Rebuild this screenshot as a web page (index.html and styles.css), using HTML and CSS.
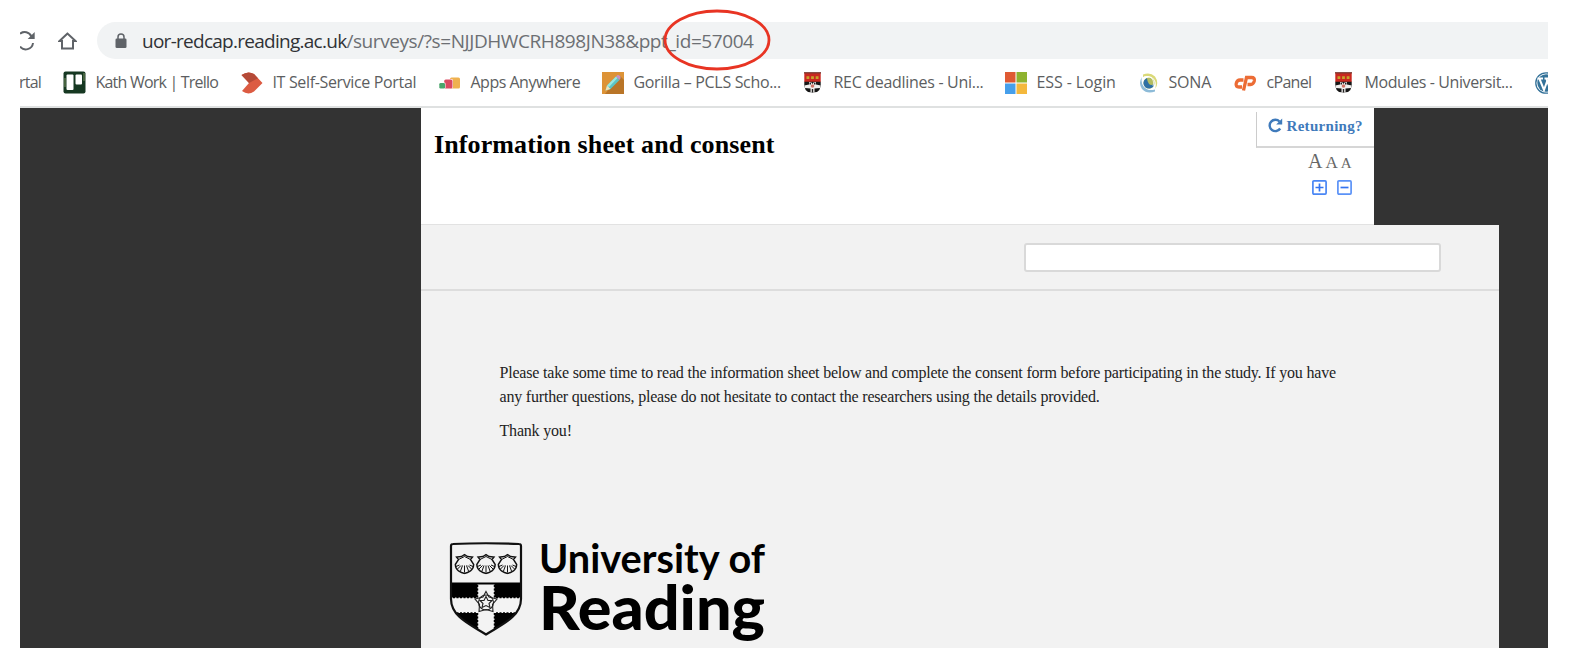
FILE: index.html
```html
<!DOCTYPE html>
<html lang="en">
<head>
<meta charset="utf-8">
<title>Information sheet and consent</title>
<link rel="stylesheet" href="styles.css">
</head>
<body>
<svg width="0" height="0" class="defs" aria-hidden="true">
  <defs>
    <symbol id="crest" viewBox="0 0 17 21">
      <path d="M.3 1H16.700V10H.3Z" fill="#c9281f"/>
      <path d="M0 .8H17" fill="none" stroke="#7d3a33" stroke-width="1.400"/>
      <path d="M.3 9.800H16.700V14Q16.200 18 13 20L8.500 20.500L4 20Q.8 18 .3 14Z" fill="#161616"/>
      <path d="M.3 13.500L5 12.500V10H7L8.500 12L10 10H12V12.500L16.700 13.500L16 16L10.500 16.500V20.500H6.500V16.500L1 16Z" fill="#f1efed"/>
      <path d="M5.500 10.500h1.500v2H5.500zM10 10.500h1.500v2H10zM7.800 17h1.400v3.500H7.800z" fill="#222"/>
      <circle cx="8.500" cy="14" r="1.800" fill="#cf7568"/>
      <path d="M2.500 4.300h2.800v2.700h-2.800zM7.100 4.300h2.800v2.700h-2.800zM11.700 4.300h2.800v2.700h-2.800z" fill="#c6a62b"/>
    </symbol>
    <symbol id="shell" viewBox="-10 -1 20 21">
      <path d="M0 0L3 2L8 2.500L6 5L9.200 10Q9 14 6 16.500L3 18L0 19L-3 18L-6 16.500Q-9 14-9.200 10L-6 5L-8 2.500L-3 2Z" fill="#f3f3f3" stroke="#111" stroke-width="1.400"/>
      <path d="M0 11V18M-2 11L-4 16.500M2 11L4 16.500M-3.500 11L-7 14.500M3.500 11L7 14.500M-5 10.500L-8.500 12M5 10.500L8.500 12M-6 5L0 2L6 5" fill="none" stroke="#111" stroke-width="1"/>
    </symbol>
  </defs>
</svg>
<div class="shot">
  <header class="toolbar">
    <svg class="reload" width="16" height="20" viewBox="0 0 16 20"><path d="M0 2.800A7.300 7.300 0 0 1 11.400 5.500M13 12A7.300 7.300 0 0 1 0 15.600" fill="none" stroke="#5f6368" stroke-width="2"/><path d="M14.700 1V8H7.700Z" fill="#5f6368"/></svg>
    <svg class="home" width="19" height="18" viewBox="0 0 19 18"><path d="M9.500 1.500L1.500 9H4V16.500H15V9H17.500Z" fill="none" stroke="#5f6368" stroke-width="2"/></svg>
    <div class="address">
      <svg width="12" height="16" viewBox="0 0 12 16"><rect x=".5" y="5.500" width="11" height="9.500" rx="1.300" fill="#5f6368"/><path d="M3 6V4a3 3 0 0 1 6 0V6" fill="none" stroke="#5f6368" stroke-width="1.500"/></svg>
      <span class="url"><b>uor-redcap.reading.ac.uk</b>/surveys/?s=NJJDHWCRH898JN38&amp;ppt_id=57004</span>
      <svg class="ring" width="108" height="62" viewBox="0 0 108 62"><ellipse cx="54" cy="31" rx="52" ry="29" fill="none" stroke="#e83423" stroke-width="2.800"/></svg>
    </div>
  </header>
  <nav class="bookmarks">
    <a class="bm cut"><span class="label">rtal</span></a>
    <a class="bm trello"><svg width="23" height="23" viewBox="0 0 23 23"><rect x=".5" y=".5" width="22" height="22" rx="2" fill="#163822"/><path d="M1 7h2v9H1zM20 2h2v8h-2z" fill="#46633f"/><rect x="3.500" y="3.500" width="7" height="15.500" rx="1" fill="#fff"/><rect x="12.500" y="3.500" width="6.500" height="10" rx="1" fill="#fff"/></svg><span class="label">Kath Work | Trello</span></a>
    <a class="bm it"><svg width="22" height="22" viewBox="0 0 22 22"><path d="M.5 3Q7-1.500 13 2L21.500 11L13 19.500Q7 23.500 1 19L8 11Z" fill="#dc5b42"/><path d="M.5 3Q7-1.500 13 2L17 6.200L8 11Z" fill="#b54a37"/></svg><span class="label">IT Self-Service Portal</span></a>
    <a class="bm apps"><svg width="22" height="12" viewBox="0 0 22 12"><rect x="11" y=".5" width="10" height="11" rx="1.500" fill="#efb14f"/><rect x="5" y="2" width="9" height="9.500" rx="1.500" fill="#fff"/><rect x="5.200" y="2.500" width="8.300" height="9" rx="1.500" fill="#db4a61"/><rect x="0" y="5.500" width="6.500" height="6" rx="1.300" fill="#fff"/><rect x=".3" y="6" width="5.700" height="5.500" rx="1.300" fill="#4aa66c"/></svg><span class="label">Apps Anywhere</span></a>
    <a class="bm gorilla"><svg width="22" height="22" viewBox="0 0 22 22"><path d="M0 0H22V22H0Z" fill="#dd9337"/><path d="M18 4L22 8V22H3Z" fill="#b97527"/><path d="M3.500 18.500L5 13.500L14 4.500L17.500 8L8.500 17Z" fill="#5cc5c4"/><path d="M5 13.500L14 4.500L15.500 6L7 15Z" fill="#9be8df"/><path d="M14 4.500L15.500 3Q17 2.500 18.500 4.500Q19 6 17.500 8Z" fill="#c792c4"/><path d="M3.500 18.500L5 13.500L8.500 17Z" fill="#eee3bb"/></svg><span class="label">Gorilla – PCLS Scho...</span></a>
    <a class="bm rec"><svg width="17" height="21"><use href="#crest"/></svg><span class="label">REC deadlines - Uni...</span></a>
    <a class="bm ess"><svg width="22" height="22" viewBox="0 0 22 22"><path d="M0 0H10.500V10.500H0Z" fill="#df5a33"/><path d="M11.500 0H22V10.500H11.500Z" fill="#8eb32f"/><path d="M0 11.500H10.500V22H0Z" fill="#469feb"/><path d="M11.500 11.500H22V22H11.500Z" fill="#f4b83c"/></svg><span class="label">ESS - Login</span></a>
    <a class="bm sona"><svg width="20" height="22" viewBox="0 0 20 22"><circle cx="10" cy="11" r="5.500" fill="#b3bd62"/><path d="M8 6Q4 8 4.500 12Q6 17 11 16.500Q15 15.500 15 12Q12 14 10 12Q8 9 8 6Z" fill="#2e70a5"/><path d="M4 2.500Q11-.5 16 4.500Q20.500 11 16 17Q18 11 15 7Q11 2.500 4 5Z" fill="#dad978"/><path d="M16 19.500Q8 22.500 3 17Q-1 11 3 5Q1.500 11 5 15Q9 19.500 16 17.500Z" fill="#8dbbd8"/><path d="M5 5Q11 3 14 8Q15.500 11 14 14" fill="none" stroke="#fff" stroke-width=".8"/></svg><span class="label">SONA</span></a>
    <a class="bm cpanel"><svg width="23" height="16" viewBox="0 0 23 16"><path d="M9.500 5H6Q3 5 2.200 8.500Q1.500 12 5 12H8" fill="none" stroke="#ec6c35" stroke-width="3.300"/><path d="M9.500 15.500L12.500 2.500H17.500Q21 2.500 20.300 6Q19.500 9.500 16.500 9.500H13.500" fill="none" stroke="#ec6c35" stroke-width="3.300"/></svg><span class="label">cPanel</span></a>
    <a class="bm modules"><svg width="17" height="21"><use href="#crest"/></svg><span class="label">Modules - Universit...</span></a>
    <a class="bm wp"><svg width="22" height="22" viewBox="0 0 22 22"><circle cx="11" cy="11" r="10.200" fill="#fff" stroke="#347299" stroke-width="1.300"/><circle cx="11" cy="11" r="8.700" fill="#347299"/><path d="M2.500 6.500H8M4.500 7L9 18L12 9.500M9.500 6.500H14.500M11.500 7L15.500 18L18.500 8" fill="none" stroke="#fff" stroke-width="2"/></svg></a>
  </nav>
  <main class="page">
    <section class="title-row">
      <h1>Information sheet and consent</h1>
      <aside class="tools">
        <a class="returning"><svg width="15" height="15" viewBox="0 0 15 15"><path d="M12.200 10.500A5.700 5.700 0 1 1 11.500 3.500" fill="none" stroke="#3f7abb" stroke-width="2.400"/><path d="M14.200.5V6.500H8.200Z" fill="#3f7abb"/></svg><span>Returning?</span></a>
        <div class="sizes"><span class="big">A</span><span class="mid">A</span><span class="small">A</span></div>
        <div class="zoomers">
          <svg width="15" height="15" viewBox="0 0 15 15"><rect x=".9" y=".9" width="13.200" height="13.200" rx="1" fill="none" stroke="#4a87f5" stroke-width="1.700"/><path d="M3.500 7.500H11.500M7.500 3.500V11.500" stroke="#3474f0" stroke-width="1.700"/></svg>
          <svg width="15" height="15" viewBox="0 0 15 15"><rect x=".9" y=".9" width="13.200" height="13.200" rx="1" fill="none" stroke="#5b92f7" stroke-width="1.700"/><path d="M3.500 7.500H11.500" stroke="#3474f0" stroke-width="1.700"/></svg>
        </div>
      </aside>
    </section>
    <section class="survey">
      <div class="field-row"><input class="field" type="text" aria-label="Participant ID"></div>
      <div class="intro">
        <p>Please take some time to read the information sheet below and complete the consent form before participating in the study. If you have<br>any further questions, please do not hesitate to contact the researchers using the details provided.</p>
        <p>Thank you!</p>
      </div>
      <svg class="logo" width="330" height="107" viewBox="0 0 330 107">
        <defs><clipPath id="shield-clip"><path d="M2 6Q2 4 4 4Q37 2.500 70 4Q72 4 72 6V59C72 77 52 85 37 94.500C22 85 2 77 2 59Z"/></clipPath></defs>
        <g clip-path="url(#shield-clip)">
          <path d="M0 42.500H74V58H0ZM0 73H74V96H0Z" fill="#000"/>
          <path d="M28.500 44.500H45.500V96H28.500ZM0 57.500H74V72.500H0Z" fill="#f3f3f3"/>
          <path d="M28.500 45V57.500H2M45.500 45V57.500H72M28.500 96V73H2M45.500 96V73H72" fill="none" stroke="#000" stroke-width="1.500" stroke-dasharray="2 1.500"/>
        </g>
        <path d="M2 6Q2 4 4 4Q37 2.500 70 4Q72 4 72 6V59C72 77 52 85 37 94.500C22 85 2 77 2 59Z" fill="none" stroke="#111" stroke-width="2.200"/>
        <use href="#shell" x="5" y="13.500" width="21" height="21"/><use href="#shell" x="26.500" y="13.500" width="21" height="21"/><use href="#shell" x="48" y="13.500" width="21" height="21"/>
        <g transform="translate(37 62.500)"><circle r="9" fill="#f3f3f3"/><g fill="none" stroke="#222" stroke-width="1.100"><path d="M0-11L3-5.500L11-3.500L6.500 2L7 9L0 7L-7 9L-6.500 2L-11-3.500L-3-5.500Z"/><circle r="7.500"/><path d="M0-6L2-2L6-2L3 1L4 5L0 3L-4 5L-3 1L-6-2L-2-2Z"/></g></g>
        <text class="logo-top" x="90" y="33" textLength="226" lengthAdjust="spacingAndGlyphs">University of</text>
        <text class="logo-main" x="90" y="90" textLength="226" lengthAdjust="spacingAndGlyphs">Reading</text>
      </svg>
    </section>
  </main>
</div>
</body>
</html>
```

FILE: styles.css
```css
* { box-sizing: border-box; }
body { margin: 0; background: #fff; overflow: hidden; }
.defs { display: block; }
.shot { width: 1528px; height: 648px; margin-left: 20px; overflow: hidden; display: flex; flex-direction: column; }
.toolbar { height: 59px; padding-top: 22px; display: flex; align-items: center; flex: none; }
.reload { flex: none; }
.home { margin-left: 22px; flex: none; }
.address { position: relative; margin-left: 20px; flex: 1; height: 37px; border-radius: 19px 0 0 19px; background: #f1f3f4; display: flex; align-items: center; padding-left: 18px; }
.url { margin-left: 15px; font: 19px/36px "Open Sans", "Noto Sans", sans-serif; color: #6c6f73; letter-spacing: -.42px; white-space: nowrap; }
.url b { font-weight: 400; color: #303236; letter-spacing: -.73px; }
.ring { position: absolute; left: 566px; top: -13px; }
.bookmarks { height: 49px; flex: none; display: flex; align-items: center; border-bottom: 2px solid #dfe1e1; overflow: hidden; }
.bm { height: 47px; flex: none; display: flex; align-items: center; color: #5c5e61; font: 16px/47px "Open Sans", "Noto Sans", sans-serif; white-space: nowrap; letter-spacing: -.4px; }
.cut { width: 43px; }
.cut .label { margin-left: -1px; letter-spacing: -.8px; }
.trello { width: 178px; letter-spacing: -.79px; }
.it { width: 198px; letter-spacing: -.35px; }
.apps { width: 163px; letter-spacing: -.5px; }
.gorilla { width: 202px; letter-spacing: -.33px; }
.rec { width: 201px; letter-spacing: -.3px; }
.ess { width: 134px; letter-spacing: -.1px; }
.sona { width: 95px; letter-spacing: -.2px; }
.cpanel { width: 101px; letter-spacing: -.7px; }
.modules { width: 200px; }
.label { margin-left: 9.500px; }
.rec .label, .modules .label { margin-left: 12.500px; }
.bm svg { flex: none; }
.page { flex: 1; background: #333; padding-left: 400.500px; }
.title-row { width: 953px; height: 117px; background: #fff; border-bottom: 1px solid #e2e2e2; display: flex; justify-content: space-between; }
h1 { margin: 20px 0 0 13.500px; font: 700 26px/33px "Liberation Serif", serif; letter-spacing: .11px; color: #000; white-space: nowrap; }
.tools { width: 118px; padding-top: 4px; font-family: "Liberation Serif", serif; }
.returning { height: 36px; border-left: 1px solid #ccc; border-bottom: 2px solid #d6d6d6; display: flex; padding: 6px 0 0 11px; gap: 4px; color: #3f7abb; font-weight: 700; font-size: 15px; line-height: 16px; letter-spacing: .3px; }
.returning svg { flex: none; }
.sizes { display: flex; justify-content: flex-end; align-items: baseline; gap: 3px; padding-right: 22px; height: 30px; line-height: 26px; color: #666; }
.big { font-size: 20px; }
.mid { font-size: 17px; }
.small { font-size: 15px; }
.zoomers { display: flex; justify-content: flex-end; gap: 10px; padding-right: 22px; margin-top: 2px; }
.survey { width: 1078.500px; height: 423px; background: #f2f2f2; }
.field-row { height: 66px; border-bottom: 2px solid #ddd; display: flex; justify-content: flex-end; padding: 18px 58px 0 0; }
.field { width: 417px; height: 29px; border: 2px solid #d9d9d9; border-radius: 3px; background: #fff; }
.intro { padding: 70px 0 0 79px; height: 249px; font: 16px/24px "Liberation Serif", serif; letter-spacing: -.193px; color: #222; white-space: nowrap; }
.intro p { margin: 0 0 10px; }
.logo { display: block; margin-left: 28.500px; overflow: visible; }
.logo-top, .logo-main { font-family: Lato, "Open Sans", sans-serif; fill: #000; }
.logo-top { font-size: 40px; font-weight: 700; }
.logo-main { font-size: 61px; font-weight: 900; }
```
